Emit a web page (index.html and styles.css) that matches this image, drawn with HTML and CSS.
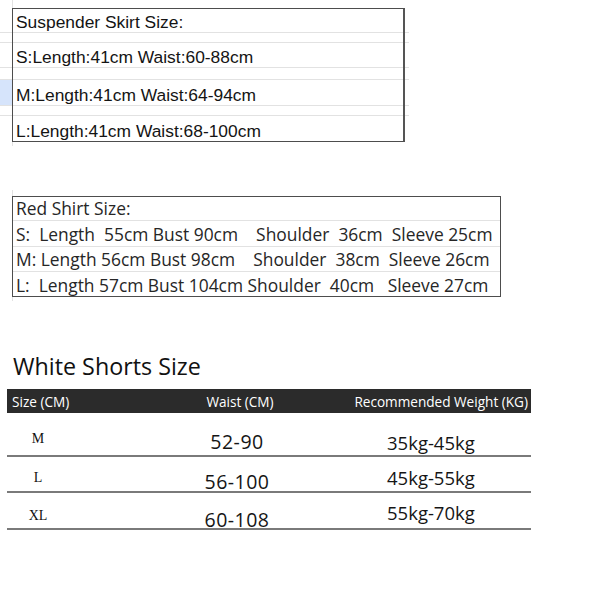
FILE: index.html
```html
<!DOCTYPE html>
<html>
<head>
<meta charset="utf-8">
<link rel="stylesheet" href="styles.css">
</head>
<body>
<div class="sheet sheet-skirt">
  <div class="gl gl-top"></div>
  <div class="row r-head"><span class="txt">Suspender Skirt Size:</span></div>
  <div class="row r-gap"></div>
  <div class="row r-body"><span class="txt">S:Length:41cm Waist:60-88cm</span></div>
  <div class="row r-gap"></div>
  <div class="row r-body"><span class="gutter sel"></span><span class="txt">M:Length:41cm Waist:64-94cm</span></div>
  <div class="row r-gap"></div>
  <div class="row r-body last"><span class="txt">L:Length:41cm Waist:68-100cm</span></div>
  <div class="gl gl-bottom"></div>
  <div class="box box-skirt"></div>
</div>

<div class="sheet sheet-shirt">
  <div class="gl gl-top"></div>
  <div class="row s-row"><span class="txt2">Red Shirt Size:</span></div>
  <div class="row s-row"><span class="txt2">S:  Length  55cm Bust 90cm    Shoulder  36cm  Sleeve 25cm</span></div>
  <div class="row s-row"><span class="txt2">M: Length 56cm Bust 98cm    Shoulder  38cm  Sleeve 26cm</span></div>
  <div class="row s-row last"><span class="txt2">L:  Length 57cm Bust 104cm Shoulder  40cm   Sleeve 27cm</span></div>
  <div class="gl gl-bottom"></div>
  <div class="box box-shirt"></div>
</div>

<h2 class="shorts-title">White Shorts Size</h2>
<div class="shorts">
  <div class="sh-head">
    <span class="h1">Size (CM)</span>
    <span class="h2">Waist (CM)</span>
    <span class="h3">Recommended Weight (KG)</span>
  </div>
  <div class="sh-row sh-r1">
    <span class="c-size">M</span>
    <span class="c-waist">52-90</span>
    <span class="c-weight">35kg-45kg</span>
  </div>
  <div class="sh-row sh-r2">
    <span class="c-size">L</span>
    <span class="c-waist">56-100</span>
    <span class="c-weight">45kg-55kg</span>
  </div>
  <div class="sh-row sh-r3">
    <span class="c-size">XL</span>
    <span class="c-waist">60-108</span>
    <span class="c-weight">55kg-70kg</span>
  </div>
</div>
</body>
</html>
```

FILE: styles.css
```css
* { box-sizing: border-box; }
html, body { margin: 0; padding: 0; background: #fff; }
body { width: 600px; height: 600px; overflow: hidden; }

.sheet { display: grid; }
.row { grid-column: 1 / -1; display: flex; align-items: center; border-bottom: 1px solid #e2e2e2; }
.row.last { border-bottom: none; }
.gl { grid-column: 1 / -1; }
.gl-top, .gl-bottom { border-left: 1px solid #e2e2e2; margin-left: 12px; width: 1px; }
.box { grid-column: 2; border: 1px solid #4d4d4d; }

.sheet > :nth-child(1) { grid-row: 1; }
.sheet > :nth-child(2) { grid-row: 2; }
.sheet > :nth-child(3) { grid-row: 3; }
.sheet > :nth-child(4) { grid-row: 4; }
.sheet > :nth-child(5) { grid-row: 5; }
.sheet > :nth-child(6) { grid-row: 6; }
.sheet > :nth-child(7) { grid-row: 7; }
.sheet > :nth-child(8) { grid-row: 8; }
.sheet > :nth-child(9) { grid-row: 9; }

/* Skirt sheet */
.sheet-skirt {
  width: 409px;
  grid-template-columns: 12px 393px 4px;
  grid-template-rows: 8px 25px 10px 25px 12px 26px 10px 26px 4px;
}
.sheet-skirt > .box-skirt { grid-row: 2 / 9; border-right: 2px solid #555; }
.txt {
  padding-left: 4px;
  padding-top: 5px;
  font-family: "Liberation Sans", Arial, sans-serif;
  font-size: 17.4px;
  color: #141414;
  white-space: pre;
}
.sheet-skirt .row { padding-left: 12px; }
.gutter { width: 12px; align-self: stretch; margin-left: -12px; }
.gutter.sel { background: #d6e4fb; }

/* Shirt sheet */
.sheet-shirt {
  margin-top: 44px;
  width: 504px;
  grid-template-columns: 12px 489px 3px;
  grid-template-rows: 6px 25px 26px 25px 25px 4px;
}
.sheet-shirt > .box-shirt { grid-row: 2 / 6; }
.sheet-shirt .row { border-bottom: none; padding-left: 12px; align-items: stretch; }
.sheet-shirt .s-row:not(.last) .txt2 { border-bottom: 1px solid #e2e2e2; }
.txt2 {
  flex: 0 0 489px;
  display: flex;
  align-items: center;
  padding-left: 4px;
  font-family: "Open Sans", "Noto Sans", sans-serif;
  font-size: 17.4px;
  color: #262626;
  white-space: pre;
}

/* Shorts */
.shorts-title {
  margin: 49px 0 0 13px;
  font-family: "Open Sans", "Noto Sans", sans-serif;
  font-weight: 400;
  font-size: 23.3px;
  line-height: 32px;
  color: #111;
}
.shorts { margin: 7px 0 0 7px; width: 524px; }
.sh-head {
  display: grid;
  grid-template-columns: 133px 200px 191px;
  height: 24px;
  align-items: center;
  background: #2b2b2b;
  color: #fff;
  font-family: "Open Sans", "Noto Sans", sans-serif;
  font-size: 13.6px;
}
.h1 { padding-left: 5px; }
.h2 { text-align: center; }
.h3 { text-align: right; padding-right: 3px; }
.sh-row {
  display: grid;
  grid-template-columns: 133px 200px 191px;
  align-items: start;
  border-bottom: 2px solid #7a7a7a;
  font-family: "Open Sans", "Noto Sans", sans-serif;
  font-size: 18.5px;
  line-height: 24px;
  color: #151515;
}
.sh-r1 { height: 44px; }
.sh-r2 { height: 36px; }
.sh-r3 { height: 37px; }
.c-size {
  font-family: "Liberation Serif", "Times New Roman", serif;
  font-size: 14px;
  line-height: 14px;
  width: 62px;
  text-align: center;
  color: #111;
}
.c-waist { text-align: center; font-size: 19.5px; letter-spacing: 0.5px; padding-right: 6px; }
.c-weight { padding-left: 47px; }

.sh-r1 .c-size { padding-top: 19px; }
.sh-r1 .c-waist { padding-top: 17px; }
.sh-r1 .c-weight { padding-top: 18px; }
.sh-r2 .c-size { padding-top: 14px; }
.sh-r2 .c-waist { padding-top: 13px; }
.sh-r2 .c-weight { padding-top: 9px; }
.sh-r3 .c-size { padding-top: 16px; }
.sh-r3 .c-waist { padding-top: 15px; }
.sh-r3 .c-weight { padding-top: 8px; }
```
